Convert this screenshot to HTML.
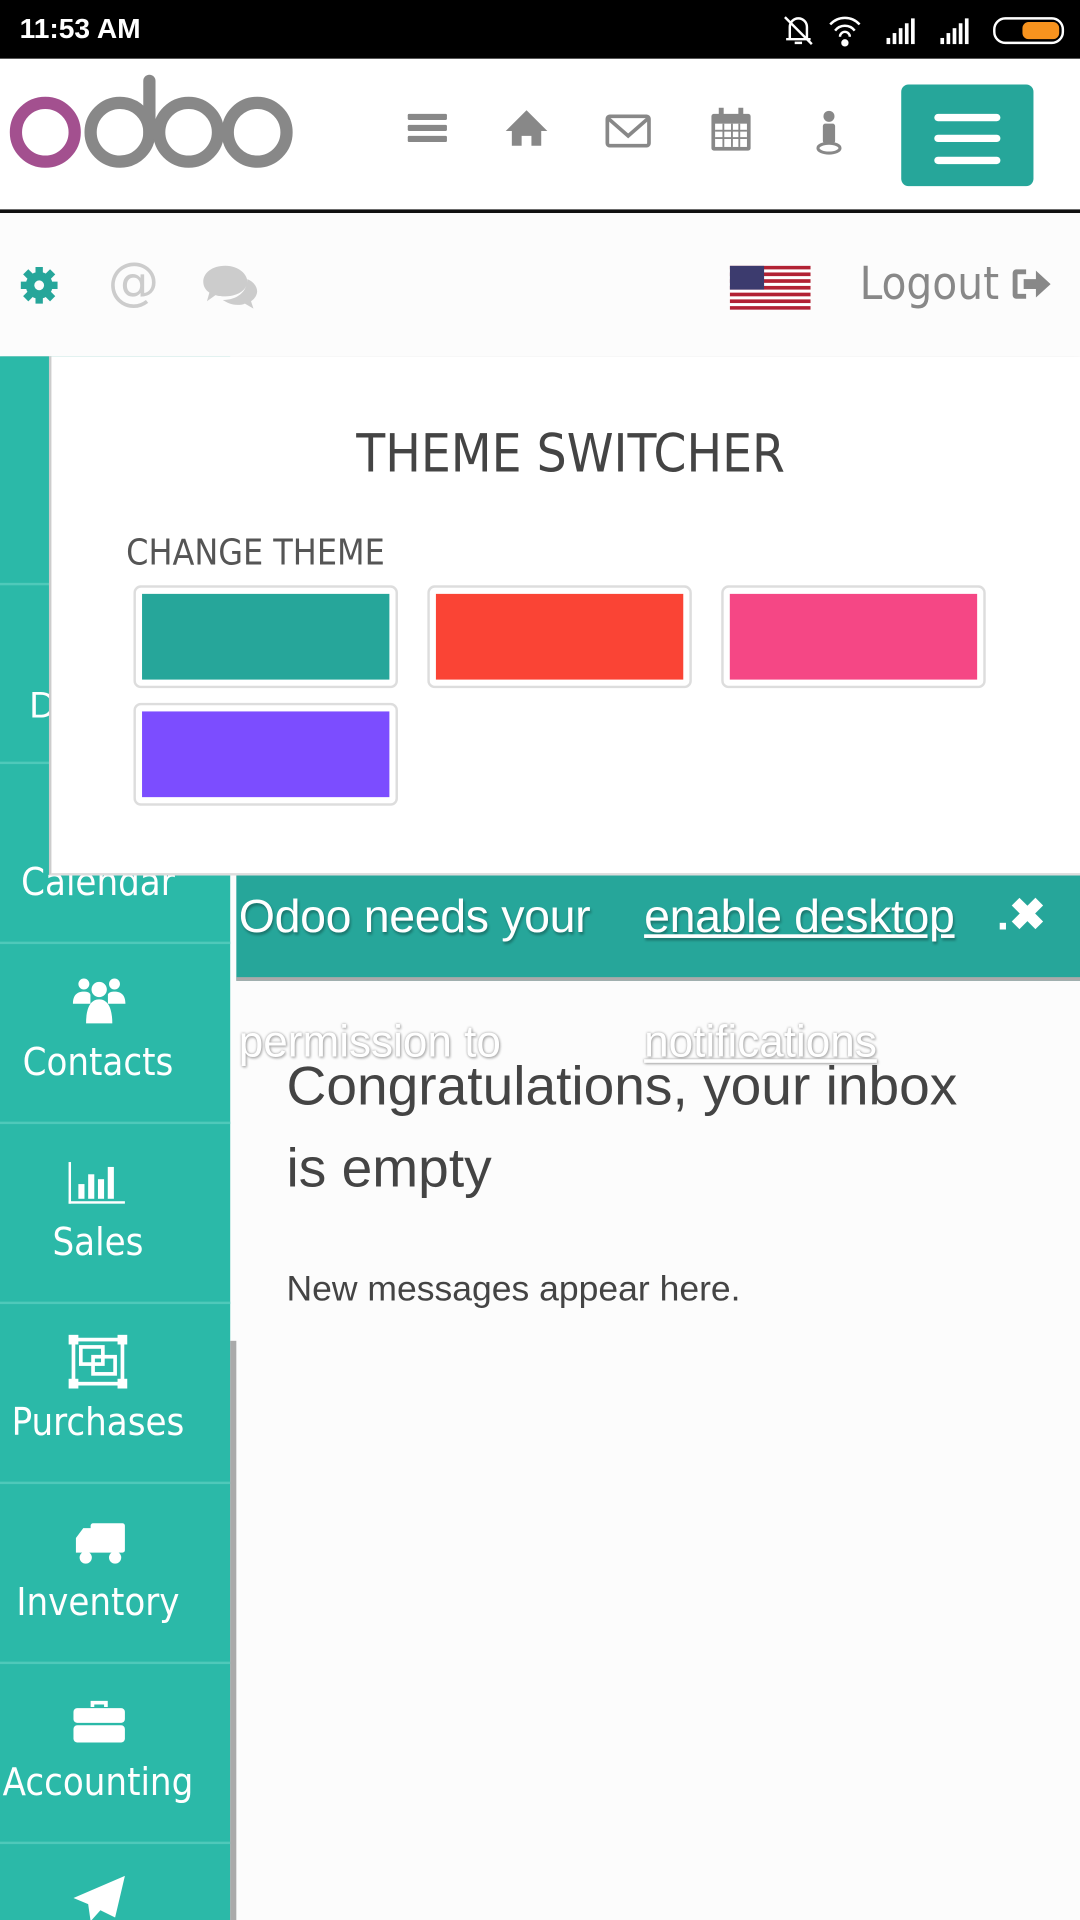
<!DOCTYPE html>
<html><head><meta charset="utf-8"><style>
html,body{margin:0;padding:0;width:1080px;height:1920px;overflow:hidden;background:#fcfcfc}
#w{position:absolute;left:0;top:0;width:882px;height:1568px;transform:scale(1.22449);transform-origin:0 0;font-family:"Liberation Sans",sans-serif;overflow:hidden;background:#fcfcfc}
.a{position:absolute}
.sb{background:#000;left:0;top:0;width:882px;height:48px;color:#fff}
.side{left:0;top:291px;width:188px;height:1277px;background:#2bb9a8}
.sep{left:0;width:188px;height:2px;background:#4fc9ba}
.lbl{left:0;width:160px;text-align:center;color:#fff;font-size:31px;font-family:"DejaVu Sans Condensed","DejaVu Sans","Liberation Sans",sans-serif;font-stretch:condensed;white-space:nowrap}
.sw{border:2px solid #ddd;border-radius:6px;width:212px;height:80px;background:#fff}
.sw div{margin:5px;height:70px}
.nt{font-size:38px;color:#fff;letter-spacing:-0.3px;text-shadow:1px 2px 2px rgba(0,0,0,.3);white-space:nowrap}
</style></head><body><div id="w">
<div class="a sb"><span class="a" style="left:16px;top:10px;font-size:23px;font-weight:bold;">11:53 AM</span>
<svg class="a" style="left:636px;top:10px" width="240" height="30" viewBox="0 0 240 30" fill="none" stroke="#fff" stroke-width="2">
<path d="M6 22h20M9 22V12a7 7 0 0 1 14 0v10M13 25h6M5 4l22 22"/>
<path d="M42 10a16 16 0 0 1 24 0M46 15a10 10 0 0 1 16 0M50 20a4 4 0 0 1 8 0"/><circle cx="54" cy="25" r="2" fill="#fff"/>
<g fill="#fff" stroke="none"><rect x="88" y="21" width="3" height="5"/><rect x="93" y="17" width="3" height="9"/><rect x="98" y="13" width="3" height="13"/><rect x="103" y="9" width="3" height="17"/><rect x="108" y="5" width="3" height="21"/>
<rect x="132" y="21" width="3" height="5"/><rect x="137" y="17" width="3" height="9"/><rect x="142" y="13" width="3" height="13"/><rect x="147" y="9" width="3" height="17"/><rect x="152" y="5" width="3" height="21"/></g>
<rect x="176" y="5" width="56" height="20" rx="9"/><rect x="199" y="8" width="30" height="14" rx="5" fill="#f7931e" stroke="none"/>
</svg></div>
<div class="a" style="left:0;top:48px;width:882px;height:124px;background:#fff"></div>
<svg class="a" style="left:6px;top:60px" width="240" height="80" viewBox="0 0 240 80" fill="none" stroke-width="10">
<circle cx="31" cy="48" r="24" stroke="#a3508f"/><circle cx="92" cy="48" r="24" stroke="#888"/><path d="M116 50V6" stroke="#888" stroke-linecap="round"/>
<circle cx="148" cy="48" r="24" stroke="#888"/><circle cx="204" cy="48" r="24" stroke="#888"/></svg>
<svg class="a" style="left:330px;top:86px" width="360" height="45" viewBox="0 0 360 45" fill="#888">
<rect x="3" y="7" width="32" height="5" rx="1"/><rect x="3" y="16" width="32" height="5" rx="1"/><rect x="3" y="25" width="32" height="5" rx="1"/>
<path d="M100 4l-17 17h5v12h8v-8h8v8h8V21h5z"/>
<rect x="166" y="9" width="34" height="24" rx="2" fill="none" stroke="#888" stroke-width="3"/><path d="M167 11l16 14 16-14" fill="none" stroke="#888" stroke-width="3"/>
<rect x="251" y="7" width="32" height="30" rx="2"/><g fill="#fff"><rect x="254" y="15" width="26" height="19"/></g><g fill="#888"><rect x="254" y="20" width="26" height="1.5"/><rect x="254" y="26" width="26" height="1.5"/><rect x="260" y="15" width="1.5" height="19"/><rect x="267" y="15" width="1.5" height="19"/><rect x="273" y="15" width="1.5" height="19"/><rect x="257" y="2" width="4" height="9"/><rect x="273" y="2" width="4" height="9"/></g>
<circle cx="347" cy="9" r="4.5"/><rect x="342" y="15" width="10" height="16" rx="2"/><ellipse cx="347" cy="35" rx="9" ry="4" fill="none" stroke="#888" stroke-width="2.5"/>
</svg>
<div class="a" style="left:736px;top:69px;width:108px;height:83px;background:#26a69a;border-radius:6px"></div>
<div class="a" style="left:763px;top:93px;width:54px;height:6px;background:#fff;border-radius:3px;box-shadow:0 17px 0 #fff,0 35px 0 #fff"></div>
<div class="a" style="left:0;top:171px;width:882px;height:3px;background:#111"></div>
<div class="a" style="left:0;top:174px;width:882px;height:117px;background:#fcfcfc;box-shadow:0 3px 4px rgba(0,0,0,.25)"></div>
<svg class="a" style="left:12px;top:212px" width="210" height="44" viewBox="0 0 210 44">
<g fill="#26a69a"><circle cx="20" cy="21" r="11"/><g stroke="#26a69a" stroke-width="6"><path d="M20 6v30M5 21h30M9 10l22 22M31 10L9 32"/></g><circle cx="20" cy="21" r="4" fill="#fcfcfc"/></g>
<text x="76" y="32" font-size="42" fill="#ccc" font-family="DejaVu Sans">@</text>
<path d="M172 5c-11 0-18 6-18 13 0 4 2 7 5 9l-2 7 7-5c3 1 5 1 8 1 11 0 18-6 18-12s-7-13-18-13z" fill="#ccc"/>
<path d="M190 16c5 2 8 6 8 10 0 3-2 6-5 8l2 6-7-4c-2 1-4 1-6 1-5 0-9-2-12-4 12 0 20-7 20-17z" fill="#ccc"/>
</svg>
<svg class="a" style="left:596px;top:217px" width="66" height="36" viewBox="0 0 66 36">
<rect width="66" height="36" fill="#fff"/><g fill="#b22234"><rect y="0" width="66" height="3"/><rect y="5.5" width="66" height="3"/><rect y="11" width="66" height="3"/><rect y="16.5" width="66" height="3"/><rect y="22" width="66" height="3"/><rect y="27.5" width="66" height="3"/><rect y="33" width="66" height="3"/></g><rect width="28" height="19.5" fill="#3c3b6e"/></svg>
<span class="a" style="left:702px;top:210px;font-size:37px;color:#888;font-family:'DejaVu Sans Condensed','DejaVu Sans',sans-serif;font-weight:300;">Logout</span>
<svg class="a" style="left:826px;top:218px" width="34" height="28" viewBox="0 0 34 28" fill="#888"><path d="M12 2H4a3 3 0 0 0-3 3v18a3 3 0 0 0 3 3h8v-4H5V6h7z"/><path d="M10 10h10V3l12 11-12 11v-7H10z"/></svg>
<div class="a side"></div>
<div class="a sep" style="top:476px"></div><div class="a sep" style="top:622px"></div><div class="a sep" style="top:769px"></div><div class="a sep" style="top:916px"></div><div class="a sep" style="top:1063px"></div><div class="a sep" style="top:1210px"></div><div class="a sep" style="top:1357px"></div><div class="a sep" style="top:1504px"></div>
<div class="a" style="left:188px;top:1095px;width:5px;height:473px;background:#aaa"></div>
<span class="a" style="left:24px;top:560px;color:#fff;font-size:30px">D</span>
<div class="a lbl" style="top:703px">Calendar</div>
<div class="a lbl" style="top:850px">Contacts</div>
<div class="a lbl" style="top:997px">Sales</div>
<div class="a lbl" style="top:1144px">Purchases</div>
<div class="a lbl" style="top:1291px">Inventory</div>
<div class="a lbl" style="top:1438px">Accounting</div>
<svg class="a" style="left:56px;top:794px" width="50" height="46" viewBox="0 0 56 46" fill="#fff">
<circle cx="14" cy="8" r="5"/><circle cx="42" cy="8" r="5"/><circle cx="28" cy="13" r="7"/><path d="M4 26c0-8 4-11 10-11s6 3 6 3v8z M52 26c0-8-4-11-10-11s-6 3-6 3v8z M16 44c0-14 4-22 12-22s12 8 12 22z"/></svg>
<svg class="a" style="left:54px;top:947px" width="50" height="40" viewBox="0 0 50 40" fill="#fff"><rect x="2" y="2" width="2" height="34"/><rect x="2" y="34" width="46" height="2"/><rect x="10" y="20" width="5" height="12"/><rect x="18" y="12" width="5" height="20"/><rect x="26" y="16" width="5" height="16"/><rect x="34" y="6" width="5" height="26"/></svg>
<svg class="a" style="left:56px;top:1090px" width="48" height="44" viewBox="0 0 48 44" fill="none" stroke="#fff" stroke-width="3"><rect x="4" y="4" width="40" height="36"/><rect x="10" y="10" width="18" height="14"/><rect x="20" y="18" width="18" height="14"/><g fill="#fff" stroke="none"><rect x="0" y="0" width="8" height="8"/><rect x="40" y="0" width="8" height="8"/><rect x="0" y="36" width="8" height="8"/><rect x="40" y="36" width="8" height="8"/></g></svg>
<svg class="a" style="left:60px;top:1242px" width="44" height="36" viewBox="0 0 44 36" fill="#fff"><rect x="14" y="2" width="28" height="24" rx="2"/><path d="M2 14l6-8h8v20H2z"/><circle cx="10" cy="30" r="5"/><circle cx="34" cy="30" r="5"/></svg>
<svg class="a" style="left:58px;top:1386px" width="46" height="38" viewBox="0 0 46 38" fill="#fff"><path d="M16 8V3h14v5h-3V6h-8v2z"/><rect x="2" y="9" width="42" height="12" rx="3"/><rect x="2" y="23" width="42" height="14" rx="3"/></svg>
<svg class="a" style="left:58px;top:1530px" width="46" height="40" viewBox="0 0 46 40" fill="#fff"><path d="M44 2L2 20l12 5 2 14 8-9 12 6z"/></svg>
<div class="a" style="left:40px;top:291px;width:842px;height:422px;background:#fff;border-left:2px solid #ccc;border-bottom:2px solid #ddd"></div>
<div class="a" style="left:40px;top:346px;width:852px;text-align:center;font-size:43px;color:#444;font-family:'DejaVu Sans Condensed','DejaVu Sans',sans-serif;font-weight:300;">THEME SWITCHER</div>
<div class="a" style="left:103px;top:434px;font-size:29px;color:#555;font-family:'DejaVu Sans Condensed','DejaVu Sans',sans-serif;">CHANGE THEME</div>
<div class="a sw" style="left:109px;top:478px"><div style="background:#26a69a"></div></div>
<div class="a sw" style="left:349px;top:478px"><div style="background:#fa4435"></div></div>
<div class="a sw" style="left:589px;top:478px"><div style="background:#f54785"></div></div>
<div class="a sw" style="left:109px;top:574px"><div style="background:#7c4dff"></div></div>
<div class="a" style="left:193px;top:715px;width:689px;height:83px;background:#26a69a;border-bottom:3px solid #aaa"></div>
<div class="a nt" style="left:195px;top:728px">Odoo needs your</div>
<div class="a nt" style="left:526px;top:728px;text-decoration:underline">enable desktop</div>
<div class="a" style="left:814px;top:726px;font-size:36px;color:#fff;font-weight:bold">.✖</div>
<div class="a" style="left:195px;top:830px;font-size:36px;color:#fff;text-shadow:0 0 2px #999,1px 1px 2px #bbb">permission to</div>
<div class="a" style="left:526px;top:830px;font-size:36px;color:#fff;text-decoration:underline;text-shadow:0 0 2px #999,1px 1px 2px #bbb">notifications</div>
<div class="a" style="left:234px;top:853px;width:575px;font-size:45px;line-height:67px;color:#444">Congratulations, your inbox is empty</div>
<div class="a" style="left:234px;top:1037px;font-size:29px;color:#444">New messages appear here.</div>
</div></body></html>
